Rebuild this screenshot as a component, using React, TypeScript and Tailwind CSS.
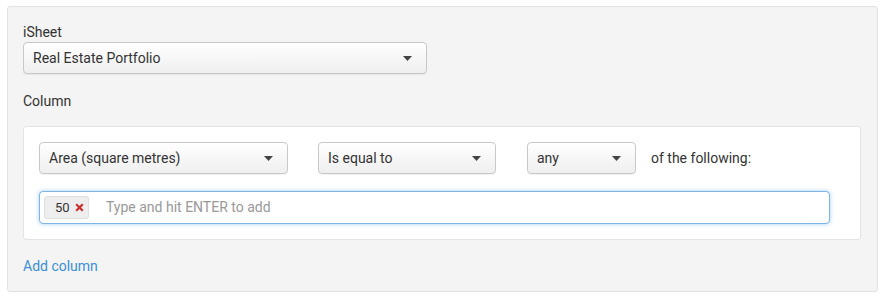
import React from 'react';

function Caret() {
  return (
    <svg width="9" height="5" viewBox="0 0 9 5" className="shrink-0">
      <path d="M0 0h9L4.5 5z" fill="#444" />
    </svg>
  );
}

function Select({ value, className }: { value: string; className: string }) {
  return (
    <div
      className={`flex h-8 items-center justify-between rounded-[4px] border border-[#c8c8c8] bg-gradient-to-b from-white to-[#efefef] pl-[9px] pr-[14px] text-[14px] text-[#333] shadow-[0_1px_1px_rgba(0,0,0,0.06)] ${className}`}
    >
      <span>{value}</span>
      <Caret />
    </div>
  );
}

export default function App() {
  return (
    <div className="bg-white pl-[7px] pt-[6px] font-['Roboto','Liberation_Sans',sans-serif] text-[14px] text-[#333]">
      <div className="h-[286px] w-[871px] rounded-[3px] border border-[#e2e2e2] bg-[#f4f4f4] px-[15px] pt-[15px]">
        <div className="leading-5">iSheet</div>
        <Select value="Real Estate Portfolio" className="w-[404px]" />
        <div className="mt-[17px] leading-5">Column</div>
        <div className="mt-[15px] w-[838px] rounded-[3px] border border-[#e4e4e4] bg-white px-[15px] py-[15px]">
          <div className="flex items-center">
            <Select value="Area (square metres)" className="w-[249px]" />
            <Select value="Is equal to" className="ml-[30px] w-[178px]" />
            <Select value="any" className="ml-[31px] w-[109px]" />
            <span className="ml-[15px]">of the following:</span>
          </div>
          <div className="mt-[17px] flex h-[33px] w-[791px] items-center rounded-[4px] border border-[#7fb4e6] bg-white pl-[4px] shadow-[0_0_4px_rgba(102,175,233,0.6)]">
            <span className="flex h-[23px] w-[45px] items-center rounded-[3px] border border-[#dedede] bg-[#eeeeee] pl-[10px] text-[13px] text-[#333]">
              50
              <svg width="9" height="9" viewBox="0 0 9 9" className="ml-[5px]">
                <path d="M1.2 1.2l6.6 6.6M7.8 1.2l-6.6 6.6" stroke="#c9302c" strokeWidth="2.2" />
              </svg>
            </span>
            <span className="ml-[17px] text-[#999]">Type and hit ENTER to add</span>
          </div>
        </div>
        <div className="mt-[16px] leading-5 text-[#3a8fd8]">Add column</div>
      </div>
    </div>
  );
}
